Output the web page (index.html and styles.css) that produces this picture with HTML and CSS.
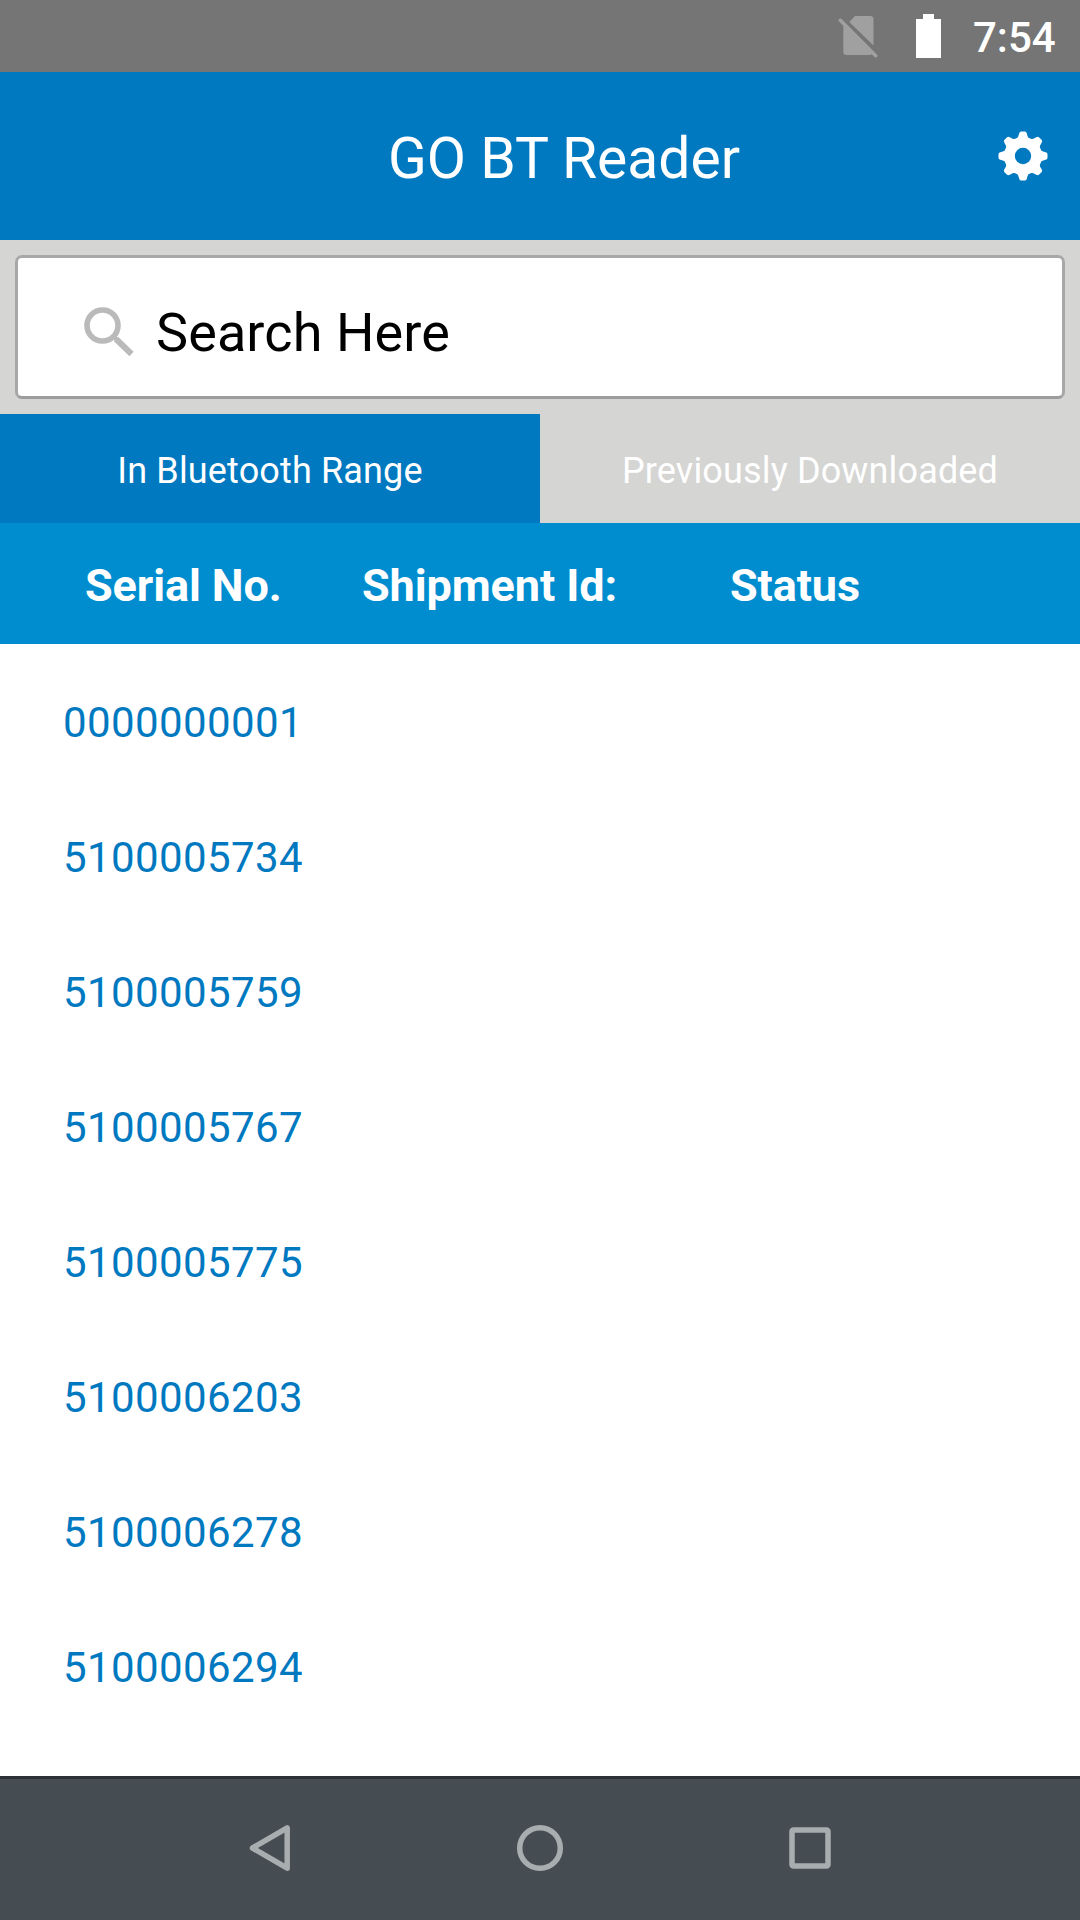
FILE: index.html
```html
<!DOCTYPE html>
<html lang="en">
<head>
  <meta charset="UTF-8">
  <meta name="viewport" content="width=device-width, initial-scale=1.0">
  <title>GO BT Reader</title>
  <link rel="stylesheet" href="styles.css">
</head>
<body>
  <div class="status-bar">
    <svg class="no-sim" width="40" height="44" viewBox="0 0 40 44">
      <path d="M11.300 7 L17 1 H32 Q35.500 1 35.500 4 V30.500 Z" fill="#a0a0a0"/>
      <path d="M5.300 8.500 L34.500 38 Q33.500 40 32 40 H8.500 Q5.300 40 5.300 37 Z" fill="#a0a0a0"/>
      <path d="M2.300 5.300 L37.700 40.700" stroke="#a0a0a0" stroke-width="3.600" stroke-linecap="round"/>
    </svg>
    <svg class="battery" width="25" height="44" viewBox="0 0 25 44">
      <path d="M7 0 H18 V5 H25 V44 H0 V5 H7 Z" fill="#fff"/>
    </svg>
    <span class="time">7:54</span>
  </div>

  <header class="app-bar">
    <h1>GO BT Reader</h1>
    <svg class="settings" width="50" height="50" viewBox="-25 -25 50 50">
      <g fill="#fff">
        <circle r="19"/>
        <g id="teeth">
          <path id="tooth" d="M-8 -16 Q-4.500 -18 -4 -22 Q-3.500 -24.500 -2 -24.500 H2 Q3.500 -24.500 4 -22 Q4.500 -18 8 -16 Z"/>
          <use href="#tooth" transform="rotate(45)"/>
          <use href="#tooth" transform="rotate(90)"/>
          <use href="#tooth" transform="rotate(135)"/>
        </g>
        <use href="#teeth" transform="rotate(180)"/>
      </g>
      <circle r="8.200" fill="#0079c1"/>
    </svg>
  </header>

  <div class="search">
    <div class="search-box">
      <svg width="50" height="50" viewBox="0 0 50 50" fill="none" stroke="#bababa">
        <circle cx="18.500" cy="18.500" r="15.500" stroke-width="5.600"/>
        <path d="M29.500 29.500 L33 33" stroke-width="4"/>
        <path d="M32 32 L47.500 47" stroke-width="6"/>
      </svg>
      <span>Search Here</span>
    </div>
  </div>

  <nav class="tabs">
    <div class="tab active"><span>In Bluetooth Range</span></div>
    <div class="tab"><span>Previously Downloaded</span></div>
  </nav>

  <div class="table-head">
    <span>Serial No.</span>
    <span>Shipment Id:</span>
    <span>Status</span>
  </div>

  <ul class="list">
    <li>0000000001</li>
    <li>5100005734</li>
    <li>5100005759</li>
    <li>5100005767</li>
    <li>5100005775</li>
    <li>5100006203</li>
    <li>5100006278</li>
    <li>5100006294</li>
  </ul>

  <footer class="nav-bar">
    <svg width="60" height="60" viewBox="0 0 60 60">
      <path d="M12.500 30 L47.200 9.800 V50.200 Z"/>
    </svg>
    <svg width="60" height="60" viewBox="0 0 60 60">
      <circle cx="30" cy="30" r="20.300"/>
    </svg>
    <svg width="60" height="60" viewBox="0 0 60 60">
      <rect x="12" y="11.900" width="36" height="36" rx="1.500"/>
    </svg>
  </footer>
</body>
</html>
```

FILE: styles.css
```css
* {
  box-sizing: border-box;
}

body {
  font-family: Roboto, sans-serif;
  background: #fff;
  color: #fff;
  margin: 0;
  height: 1920px;
  display: flex;
  flex-direction: column;
  overflow: hidden;
}

svg {
  display: block;
  flex: none;
}

.status-bar {
  height: 72px;
  background: #757575;
  display: flex;
  justify-content: flex-end;
  align-items: flex-start;
  padding-right: 24px;
}

.no-sim {
  margin: 15px 38px 0 0;
}

.battery {
  margin: 14px 0 0;
}

.time {
  width: 83px;
  margin-left: 32px;
  font-size: 42px;
  font-weight: 500;
  line-height: 75px;
  white-space: nowrap;
}

.app-bar {
  height: 168px;
  background: #0079c1;
  display: grid;
  grid-template-columns: 1fr 50px;
  align-items: center;
  padding: 0 32px 0 80px;
}

.app-bar h1 {
  margin: 0;
  padding: 5px 0 0 50px;
  font-size: 57px;
  font-weight: 400;
  text-align: center;
}

.settings {
  margin-top: -1px;
}

.search {
  height: 174px;
  background: #d5d5d3;
  padding: 15px;
}

.search-box {
  height: 144px;
  background: #fff;
  border: 3px solid #a8a8a8;
  border-bottom-color: #9c9c9c;
  border-radius: 7px;
  display: flex;
  align-items: center;
  padding: 10px 0 0 66px;
  color: #000;
  font-size: 54px;
}

.search-box span {
  margin-left: 22px;
  letter-spacing: 0.1px;
}

.tabs {
  height: 109px;
  display: grid;
  grid-template-columns: 1fr 1fr;
}

.tab {
  background: #d5d5d3;
  display: flex;
  justify-content: center;
  align-items: center;
  padding-top: 4px;
  font-size: 36px;
  letter-spacing: 0.15px;
}

.tab.active {
  background: #0079c1;
}

.table-head {
  height: 121px;
  background: #008dcf;
  display: grid;
  grid-template-columns: 277px 368px 1fr;
  align-items: center;
  padding: 4px 0 0 85px;
  font-size: 45px;
  font-weight: 700;
  letter-spacing: -0.1px;
}

.list {
  flex: 1;
  margin: 0;
  padding: 11px 0 0 63px;
  list-style: none;
  color: #0079c1;
  font-size: 42px;
  letter-spacing: 0.4px;
}

.list li {
  height: 135px;
  line-height: 135px;
}

.nav-bar {
  height: 144px;
  background: #464d52;
  border-top: 3px solid #2b3135;
  display: flex;
  justify-content: center;
  align-items: center;
  gap: 210px;
  padding-bottom: 3px;
}

.nav-bar svg {
  fill: none;
  stroke: #a8adb0;
  stroke-width: 5.5;
  stroke-linejoin: round;
}
```
